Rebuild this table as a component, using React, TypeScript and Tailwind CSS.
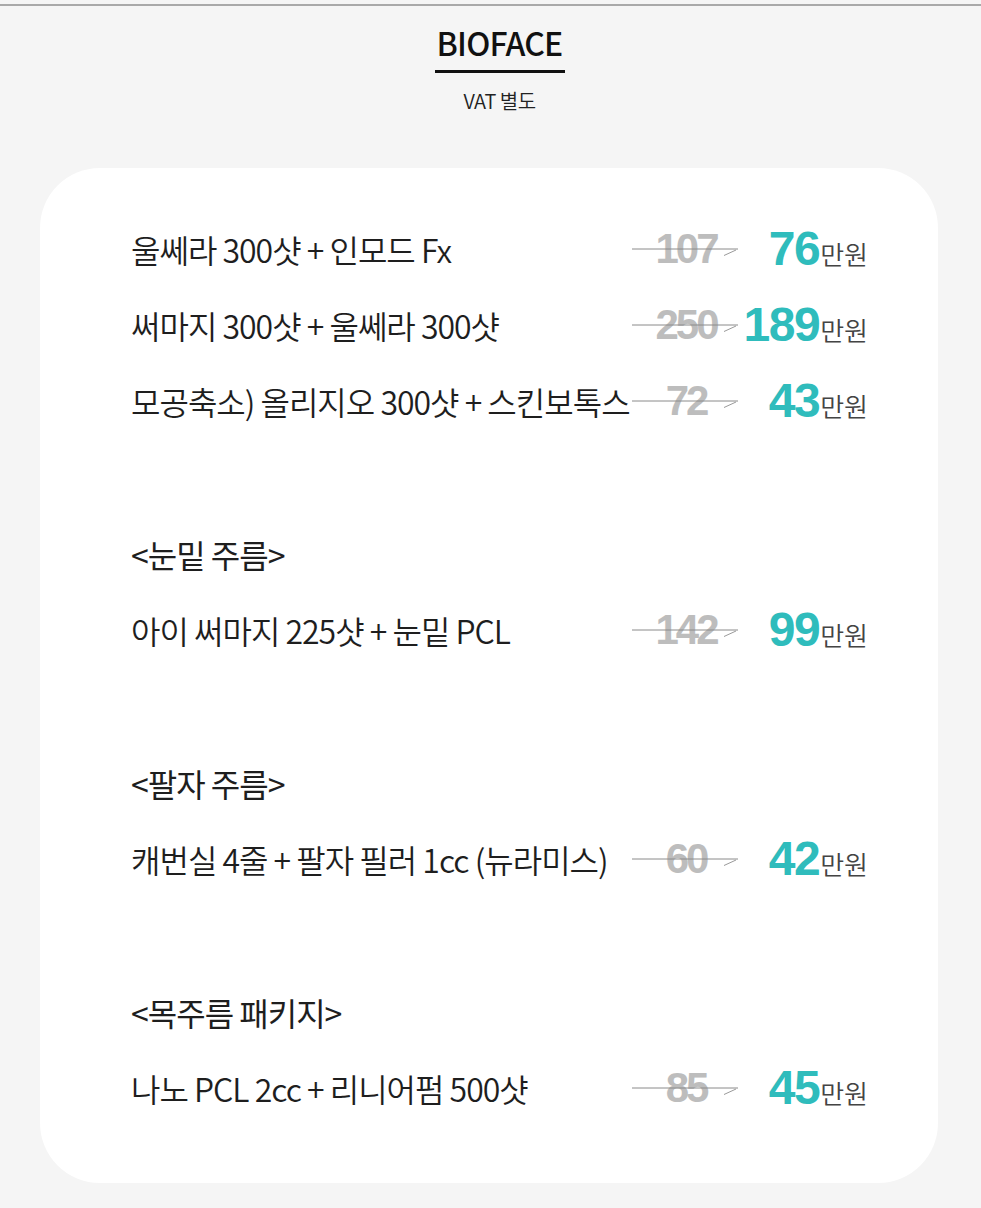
import React from 'react';

type Item = { name: string; before: string; after: string };
type Section = { title?: string; items: Item[] };

const sections: Section[] = [
  {
    items: [
      { name: '울쎄라 300샷 + 인모드 Fx', before: '107', after: '76' },
      { name: '써마지 300샷 + 울쎄라 300샷', before: '250', after: '189' },
      { name: '모공축소) 올리지오 300샷 + 스킨보톡스', before: '72', after: '43' },
    ],
  },
  {
    title: '<눈밑 주름>',
    items: [{ name: '아이 써마지 225샷 + 눈밑 PCL', before: '142', after: '99' }],
  },
  {
    title: '<팔자 주름>',
    items: [{ name: '캐번실 4줄 + 팔자 필러 1cc (뉴라미스)', before: '60', after: '42' }],
  },
  {
    title: '<목주름 패키지>',
    items: [{ name: '나노 PCL 2cc + 리니어펌 500샷', before: '85', after: '45' }],
  },
];

const kr = { fontFamily: '"Noto Sans CJK KR", "Noto Sans", sans-serif' };
const num = { fontFamily: '"Liberation Sans", Arial, sans-serif' };

const OldPrice = ({ value }: { value: string }) => (
  <div className="relative shrink-0 w-[108px] h-[40px] flex items-center justify-center">
    <span className="text-[42px] font-bold text-[#bdbdbd] tracking-[-3px] leading-none" style={num}>
      {value}
    </span>
    <svg className="absolute left-0 top-[19px]" width="108" height="10" viewBox="0 0 108 10">
      <line x1="0" y1="1" x2="106" y2="1" stroke="#8a8a8a" strokeWidth="1" />
      <line x1="92" y1="7.5" x2="104" y2="2" stroke="#9a9a9a" strokeWidth="1" />
    </svg>
  </div>
);

const Row = ({ item }: { item: Item }) => (
  <div className="h-[76px] flex items-center">
    <div className="flex-1 min-w-0 text-[32px] font-[350] text-[#1e1e1e] tracking-[-1px] whitespace-nowrap" style={kr}>
      {item.name}
    </div>
    <OldPrice value={item.before} />
    <div className="shrink-0 w-[128px] flex items-baseline justify-end whitespace-nowrap">
      <span className="text-[48px] font-bold text-[#2fbcbc] tracking-[-1.5px] leading-none" style={num}>
        {item.after}
      </span>
      <span className="text-[26px] font-[350] text-[#444] leading-none ml-[1px]" style={kr}>
        만원
      </span>
    </div>
  </div>
);

export default function App() {
  return (
    <div className="min-h-[1208px] bg-[#f5f5f5] pt-[4px]">
      <div className="h-[2px] bg-[#a9a9a9]" />
      <div className="flex flex-col items-center pt-[18px] pl-[18px]" style={kr}>
        <div className="text-[32px] font-medium text-[#111] tracking-[-0.8px] leading-[36px]">BIOFACE</div>
        <div className="w-[130px] h-[3px] bg-[#111] mt-[10px]" />
        <div className="text-[20px] font-[350] text-[#222] tracking-[-0.5px] mt-[16px] leading-[24px]">VAT 별도</div>
      </div>
      <div className="mx-[40px] mt-[55px] w-[898px] bg-white rounded-[60px] pt-[43px] pb-[57px] pl-[91px] pr-[70px]">
        {sections.map((s, i) => (
          <div key={i} className={i > 0 ? 'mt-[77px]' : ''}>
            {s.title && (
              <div className="h-[76px] flex items-center text-[32px] font-normal text-[#1e1e1e] tracking-[-1px]" style={kr}>
                {s.title}
              </div>
            )}
            {s.items.map((it) => (
              <Row key={it.name} item={it} />
            ))}
          </div>
        ))}
      </div>
    </div>
  );
}
